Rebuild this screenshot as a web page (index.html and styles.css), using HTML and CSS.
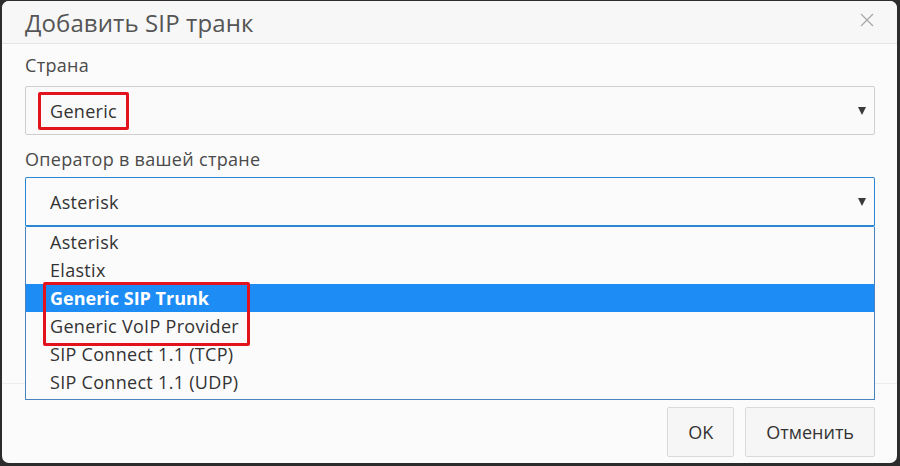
FILE: index.html
```html
<!DOCTYPE html>
<html lang="ru">
<head>
<meta charset="utf-8">
<title>Добавить SIP транк</title>
<link rel="stylesheet" href="styles.css">
</head>
<body>
<div class="dialog">
  <div class="header">
    <h1 class="title">Добавить SIP транк</h1>
    <svg class="close" width="16" height="16" viewBox="0 0 16 16"><path d="M2 2 L14 14 M14 2 L2 14" stroke="#a8a8a8" stroke-width="1.3" fill="none"/></svg>
  </div>
  <div class="body">
    <div class="label">Страна</div>
    <div class="select">
      <span class="value">Generic</span>
      <span class="arrow"></span>
      <span class="mark mark-country"></span>
    </div>
    <div class="label label-op">Оператор в вашей стране</div>
    <div class="combo">
      <div class="select select-open">
        <span class="value">Asterisk</span>
        <span class="arrow"></span>
      </div>
      <ul class="list">
        <li>Asterisk</li>
        <li>Elastix</li>
        <li class="active">Generic SIP Trunk</li>
        <li>Generic VoIP Provider</li>
        <li>SIP Connect 1.1 (TCP)</li>
        <li>SIP Connect 1.1 (UDP)</li>
        <li class="mark mark-list"></li>
      </ul>
    </div>
  </div>
  <div class="footer">
    <button class="btn">OK</button>
    <button class="btn">Отменить</button>
  </div>
</div>
</body>
</html>
```
FILE: styles.css
```css
* { box-sizing: border-box; }
html, body { margin: 0; height: 100%; }
body {
  background: #2c2c2c;
  padding: 1px 3px 3px 2px;
  font-family: "Open Sans", "Noto Sans", sans-serif;
  color: #444;
}
.dialog {
  height: 462px;
  background: #fbfbfb;
  border-radius: 7px;
  display: flex;
  flex-direction: column;
  overflow: hidden;
}
.header {
  height: 43px;
  flex: none;
  background: #f7f7f7;
  border-bottom: 1px solid #e4e4e4;
  display: flex;
  align-items: center;
  justify-content: space-between;
  padding: 0 22px 0 23px;
}
.title {
  margin: 0;
  font-weight: 400;
  font-size: 24px;
  color: #555;
  letter-spacing: 0.1px;
}
.close { margin-top: -4px; }
.body {
  flex: 1;
  padding: 9px 22px 0 23px;
}
.label {
  font-size: 18px;
  letter-spacing: 0.3px;
  line-height: 24px;
  margin-bottom: 9px;
  color: #4a4a4a;
}
.label-op { margin-top: 12px; margin-bottom: 6px; }
.select {
  position: relative;
  height: 49px;
  border: 1px solid #cfcfcf;
  border-radius: 2px;
  background: #fafafa;
  display: flex;
  align-items: center;
  justify-content: space-between;
  padding: 0 8px 0 24px;
  font-size: 18px;
  letter-spacing: 0.3px;
  color: #333;
}
.arrow {
  width: 0; height: 0;
  border-left: 4.5px solid transparent;
  border-right: 4.5px solid transparent;
  border-top: 8px solid #3a3a3a;
}
.combo { position: relative; }
.select-open {
  height: 50px;
  border: 1px solid #2c86d3;
  border-bottom-width: 2px;
  background: #fbfbfb;
}
.list {
  position: absolute;
  left: 0; right: 0; top: 100%;
  margin: 0;
  padding: 1px 0 3px;
  list-style: none;
  background: #fbfbfb;
  border: 1px solid #4a84bf;
  border-top: none;
  font-size: 18px;
  letter-spacing: 0.3px;
  color: #333;
  z-index: 2;
}
.list li {
  height: 28px;
  line-height: 28px;
  padding-left: 24px;
}
.list li.active {
  background: #1e8cf5;
  color: #fff;
  font-weight: 700;
  letter-spacing: 0;
}
.mark {
  position: absolute;
  border: 3px solid #e3131d;
  border-radius: 2px;
}
.mark-country { left: 12px; top: 5px; width: 91px; height: 38px; }
.list li.mark-list { position: absolute; left: 17px; top: 55px; width: 207px; height: 64px; padding: 0; }
.footer {
  height: 80px;
  flex: none;
  border-top: 1px solid #ececec;
  display: flex;
  justify-content: flex-end;
  align-items: flex-start;
  gap: 11px;
  padding: 23px 22px 0 0;
}
.btn {
  height: 50px;
  padding: 0 20px;
  font-family: "Open Sans", "Noto Sans", sans-serif;
  font-size: 18px;
  color: #333;
  background: #f6f6f6;
  border: 1px solid #dadada;
  border-radius: 2px;
}
```
